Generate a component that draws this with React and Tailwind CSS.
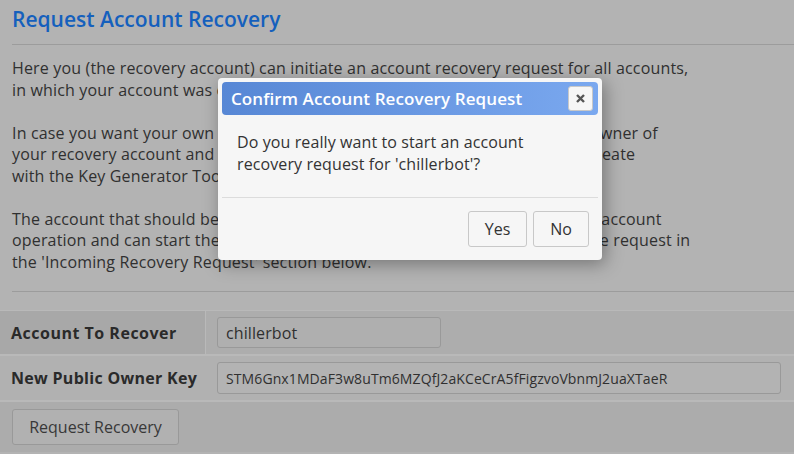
import React from "react";

const lines = [
  "Here you (the recovery account) can initiate an account recovery request for all accounts,",
  "in which your account was configured as recovery account.",
  "",
  "In case you want your own account to be recovered you have to contact the owner of",
  "your recovery account and provide a fresh public owner key, which you can create",
  "with the Key Generator Tool.",
  "",
  "The account that should be recovered needs to confirm this request using an account",
  "operation and can start the recovery procedure as soon as it has approved the request in",
  "the 'Incoming Recovery Request' section below.",
];

const ConfirmDialog = () => (
  <div className="absolute left-[218px] top-[78px] w-[384px] h-[182px] rounded-[4px] bg-[#f6f6f6] p-1 shadow-[3px_4px_18px_rgba(0,0,0,0.35)]">
    <div className="flex items-center justify-between h-[33px] rounded-[4px] bg-gradient-to-r from-[#5787d5] to-[#7aa8ef] pl-[9px] pr-[5px]">
      <span className="text-white text-[17px] font-semibold tracking-[0.1px]">Confirm Account Recovery Request</span>
      <button className="flex items-center justify-center w-[25px] h-[25px] rounded-[3px] border border-[#c8c8c8] bg-[#f6f6f6]">
        <svg width="9" height="9" viewBox="0 0 9 9">
          <path d="M1 1L8 8M8 1L1 8" stroke="#555" strokeWidth="2.4" />
        </svg>
      </button>
    </div>

    <p className="pl-[15px] pt-[17px] text-[16px] leading-[21.5px] tracking-[0.1px] text-[#333]">
      Do you really want to start an account
      <br />
      recovery request for 'chillerbot'?
    </p>

    <div className="mt-[22px] border-t border-[#dcdcdc]" />

    <div className="flex justify-end gap-[6px] pt-[13px] pr-[9px]">
      <button className="h-[36px] w-[59px] rounded-[3px] border border-[#c8c8c8] bg-[#f6f6f6] text-[16px] text-[#333]">
        Yes
      </button>
      <button className="h-[36px] w-[56px] rounded-[3px] border border-[#c8c8c8] bg-[#f6f6f6] text-[16px] text-[#333]">
        No
      </button>
    </div>
  </div>
);

export default function App() {
  return (
    <div className="relative h-[454px] overflow-hidden bg-[#b3b3b3] font-['Open_Sans',sans-serif] text-[#303030]">
      <div className="pl-3 pt-[5px]">
        <h2 className="text-[21px] leading-[28px] font-semibold text-[#1560bd]">Request Account Recovery</h2>
        <div className="mt-[11px] border-t border-[#9c9c9c]" />

        <div className="mt-[13px] text-[16px] leading-[21.5px] tracking-[0.16px]">
          {lines.map((line, i) => (
            <div key={i} className="h-[21.5px] whitespace-nowrap">
              {line}
            </div>
          ))}
        </div>

        <div className="mt-[18px] border-t border-[#9c9c9c]" />
      </div>

      <div className="mt-[18px] border-t border-[#b9b9b9]">
        <div className="flex h-[45px] border-b-2 border-[#b9b9b9] bg-[#adadad]">
          <div className="flex items-center w-[206px] pl-[11px] bg-[#a8a8a8] border-r border-[#b9b9b9] font-bold text-[16px] text-[#2a2a2a] tracking-[0.5px]">
            Account To Recover
          </div>
          <div className="flex items-center pl-[11px]">
            <div className="flex items-center w-[224px] h-[31px] rounded-[3px] border border-[#999] bg-[#afafaf] pl-2 text-[16px] tracking-[0.1px]">
              chillerbot
            </div>
          </div>
        </div>

        <div className="flex h-[46px] border-b-2 border-[#b9b9b9] bg-[#b1b1b1]">
          <div className="flex items-center w-[206px] pl-[11px] font-bold text-[16px] text-[#2a2a2a] tracking-[0.3px]">
            New Public Owner Key
          </div>
          <div className="flex flex-1 items-center pl-[11px] pr-[13px]">
            <div className="flex flex-1 items-center h-[32px] rounded-[3px] border border-[#999] bg-[#b3b3b3] pl-2 text-[14px] tracking-[0.1px]">
              STM6Gnx1MDaF3w8uTm6MZQfJ2aKCeCrA5fFigzvoVbnmJ2uaXTaeR
            </div>
          </div>
        </div>

        <div className="flex items-center h-[50px] bg-[#acacac] pl-3">
          <button className="h-[36px] w-[167px] rounded-[3px] border border-[#999] bg-[#b1b1b1] text-[16px] text-[#383838]">
            Request Recovery
          </button>
        </div>
      </div>

      <ConfirmDialog />
    </div>
  );
}
